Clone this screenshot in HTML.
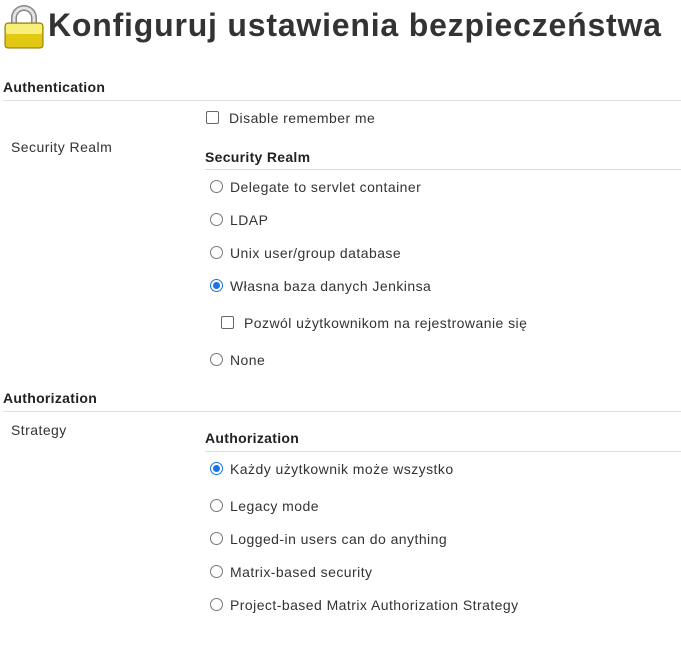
<!DOCTYPE html>
<html><head><meta charset="utf-8"><style>
body{margin:0;width:681px;height:645px;background:#fff;font-family:"Liberation Sans",sans-serif;color:#333;position:relative;overflow:hidden}
.a{position:absolute;white-space:nowrap;font-size:14px;line-height:18px;transform:translateY(-8px);letter-spacing:0.45px}
.b{font-weight:bold;color:#222;letter-spacing:0.3px}
.l{position:absolute;height:1px;background:#ddd}
.r{position:absolute;width:11px;height:11px;border:1px solid #777;border-radius:50%;background:#fff;transform:translateY(-6px)}
.r.on{border-color:#1a73e8}
.r.on::after{content:"";position:absolute;left:2px;top:2px;width:7px;height:7px;border-radius:50%;background:#1a73e8}
.c{position:absolute;width:11px;height:11px;border:1px solid #666;border-radius:2px;background:#fff;transform:translateY(-6px)}
</style></head><body>
<svg style="position:absolute;left:3px;top:4px" width="42" height="46" viewBox="0 0 42 46">
<path d="M11 22 V14 A10 10 0 0 1 31 14 V22" fill="none" stroke="#888" stroke-width="6"/>
<path d="M11 22 V14 A10 10 0 0 1 31 14 V22" fill="none" stroke="#e4e4e4" stroke-width="3"/>
<rect x="2" y="19" width="38" height="25" rx="3" fill="#e2c810" stroke="#8a7600"/>
<rect x="3" y="20" width="36" height="10" rx="2" fill="#f8ef7a"/>
</svg>
<div class="a b" style="left:48px;top:25px;font-size:32px;line-height:40px;transform:translateY(-20px);color:#333;letter-spacing:0.8px">Konfiguruj ustawienia bezpieczeństwa</div>
<div class="a b" style="left:3px;top:86px">Authentication</div>
<div class="l" style="left:3px;top:100px;width:678px"></div>
<div class="c" style="left:206px;top:117px"></div>
<div class="a" style="left:229px;top:117px">Disable remember me</div>
<div class="a" style="left:11px;top:146px">Security Realm</div>
<div class="a b" style="left:205px;top:156px">Security Realm</div>
<div class="l" style="left:205px;top:169px;width:476px"></div>
<div class="r" style="left:210px;top:186px"></div><div class="a" style="left:230px;top:186px">Delegate to servlet container</div>
<div class="r" style="left:210px;top:219px"></div><div class="a" style="left:230px;top:219px">LDAP</div>
<div class="r" style="left:210px;top:252px"></div><div class="a" style="left:230px;top:252px">Unix user/group database</div>
<div class="r on" style="left:210px;top:285px"></div><div class="a" style="left:230px;top:285px">Własna baza danych Jenkinsa</div>
<div class="c" style="left:221px;top:322px"></div><div class="a" style="left:244px;top:322px">Pozwól użytkownikom na rejestrowanie się</div>
<div class="r" style="left:210px;top:359px"></div><div class="a" style="left:230px;top:359px">None</div>
<div class="a b" style="left:3px;top:397px">Authorization</div>
<div class="l" style="left:3px;top:411px;width:678px"></div>
<div class="a" style="left:11px;top:429px">Strategy</div>
<div class="a b" style="left:205px;top:437px">Authorization</div>
<div class="l" style="left:205px;top:451px;width:476px"></div>
<div class="r on" style="left:210px;top:468px"></div><div class="a" style="left:230px;top:468px">Każdy użytkownik może wszystko</div>
<div class="r" style="left:210px;top:505px"></div><div class="a" style="left:230px;top:505px">Legacy mode</div>
<div class="r" style="left:210px;top:538px"></div><div class="a" style="left:230px;top:538px">Logged-in users can do anything</div>
<div class="r" style="left:210px;top:571px"></div><div class="a" style="left:230px;top:571px">Matrix-based security</div>
<div class="r" style="left:210px;top:604px"></div><div class="a" style="left:230px;top:604px">Project-based Matrix Authorization Strategy</div>
</body></html>
